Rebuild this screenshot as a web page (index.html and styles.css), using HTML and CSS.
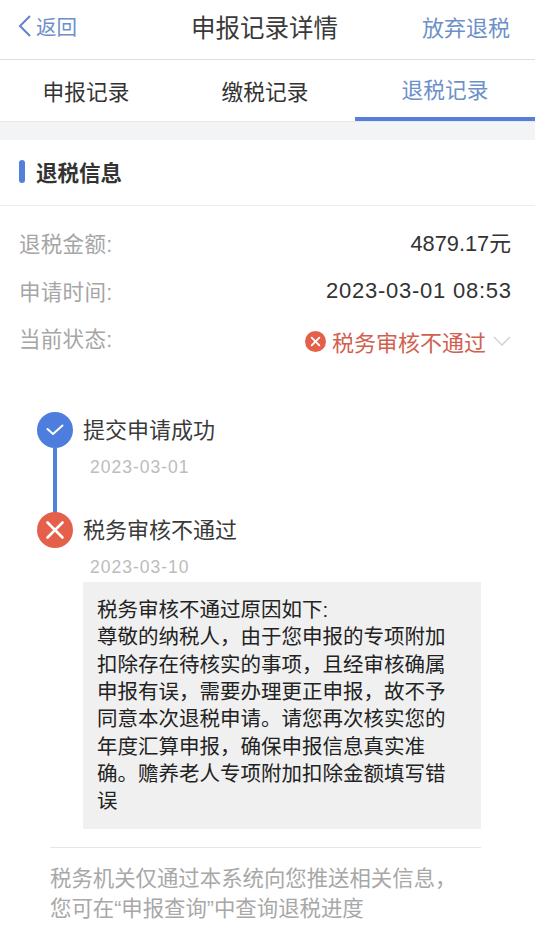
FILE: index.html
```html
<!DOCTYPE html>
<html lang="zh-CN">
<head>
<meta charset="utf-8">
<title>申报记录详情</title>
<link rel="stylesheet" href="styles.css">
</head>
<body>
<header class="navbar">
  <div class="back">
    <svg class="back-icon" viewBox="0 0 15 24"><path d="M13 2 3 12l10 10"/></svg>
    <span>返回</span>
  </div>
  <h1 class="nav-title">申报记录详情</h1>
  <div class="nav-action">放弃退税</div>
</header>
<nav class="tabs">
  <div class="tab">申报记录</div>
  <div class="tab">缴税记录</div>
  <div class="tab tab-active">退税记录</div>
</nav>
<div class="band"></div>
<section class="section-head">
  <span class="section-mark"></span>
  <h2 class="section-title">退税信息</h2>
</section>
<section class="info">
  <div class="row">
    <span class="label">退税金额:</span>
    <span class="value">4879.17元</span>
  </div>
  <div class="row">
    <span class="label">申请时间:</span>
    <span class="value value-date">2023-03-01 08:53</span>
  </div>
  <div class="row">
    <span class="label">当前状态:</span>
    <span class="status">
      <svg class="status-icon" viewBox="0 0 22 22"><circle cx="11" cy="11" r="11" fill="#e4604a"/><path d="M7 7l8 8M15 7l-8 8" stroke="#fff" stroke-width="2" stroke-linecap="round" fill="none"/></svg>
      <span class="status-text">税务审核不通过</span>
      <svg class="chevron" viewBox="0 0 18 10"><path d="M1 1l8 8 8-8"/></svg>
    </span>
  </div>
</section>
<section class="timeline">
  <div class="step step-first">
    <div class="marker">
      <svg class="dot" viewBox="0 0 36 36"><circle cx="18" cy="18" r="18" fill="#4d7ddd"/><path d="M10.5 17l5.5 5 9.5-8.5" stroke="#fff" stroke-width="2" stroke-linecap="round" stroke-linejoin="round" fill="none"/></svg>
      <span class="line"></span>
    </div>
    <div class="step-body">
      <div class="step-title">提交申请成功</div>
      <div class="step-date">2023-03-01</div>
    </div>
  </div>
  <div class="step">
    <div class="marker">
      <svg class="dot" viewBox="0 0 36 36"><circle cx="18" cy="18" r="18" fill="#e4604a"/><path d="M10.5 10.5l15 15M25.5 10.5l-15 15" stroke="#fff" stroke-width="2.6" stroke-linecap="round" fill="none"/></svg>
    </div>
    <div class="step-body">
      <div class="step-title">税务审核不通过</div>
      <div class="step-date">2023-03-10</div>
      <div class="reason">税务审核不通过原因如下:<br>尊敬的纳税人，由于您申报的专项附加扣除存在待核实的事项，且经审核确属申报有误，需要办理更正申报，故不予同意本次退税申请。请您再次核实您的年度汇算申报，确保申报信息真实准确。赡养老人专项附加扣除金额填写错误</div>
    </div>
  </div>
</section>
<footer class="note">税务机关仅通过本系统向您推送相关信息，您可在“申报查询”中查询退税进度</footer>
</body>
</html>
```

FILE: styles.css
```css
* { box-sizing: border-box; }
html, body { margin: 0; padding: 0; }
body {
  width: 535px;
  height: 942px;
  overflow: hidden;
  background: #fff;
  color: #333;
  font-family: "Liberation Sans", "Noto Sans CJK SC", sans-serif;
}
h1, h2 { margin: 0; font-weight: 400; }

.navbar {
  display: flex;
  align-items: center;
  justify-content: space-between;
  height: 60px;
  padding: 0 25px 7px 17px;
  border-bottom: 1px solid #dedede;
}
.back { display: flex; align-items: center; gap: 4px; width: 110px; font-size: 20.5px; color: #6d90c9; }
.back-icon { width: 15px; height: 24px; fill: none; stroke: #5f84cf; stroke-width: 2; }
.nav-title { margin-left: 2px; font-size: 24.5px; color: #3a3a3a; }
.nav-action { width: 110px; text-align: right; font-size: 22px; color: #6d90c9; }

.tabs { display: grid; grid-template-columns: 175px 180px 180px; height: 61px; }
.tab {
  display: flex;
  align-items: center;
  justify-content: center;
  font-size: 21.7px;
  padding-bottom: 1px;
  color: #333;
}
.tab:first-child { padding-right: 3px; }
.tab-active { color: #6d90c9; border-bottom: 4px solid #5380db; padding-bottom: 0; }

.band { height: 19px; background: #f3f4f6; border-top: 1px solid #e8e8e8; }

.section-head {
  display: flex;
  align-items: center;
  gap: 11px;
  height: 66px;
  padding: 0 0 2px 19px;
  border-bottom: 1px solid #ececec;
}
.section-mark { width: 6px; height: 23px; border-radius: 3px; background: #5380db; }
.section-title { font-size: 21.5px; font-weight: 700; color: #333; }

.info { padding: 13px 24px 0 19px; }
.row { display: flex; align-items: center; justify-content: space-between; height: 47.5px; }
.label { font-size: 21.5px; color: #a6a6a6; letter-spacing: 0.3px; }
.value { padding-top: 2px; font-size: 21.8px; line-height: 28px; color: #333; }
.value-date { font-size: 22px; letter-spacing: 0.75px; margin-right: -0.75px; }
.status { display: flex; align-items: center; padding-top: 7px; }
.status-icon { width: 21px; height: 21px; margin-right: 6px; }
.status-text { font-size: 22px; color: #d2604f; }
.chevron { width: 18px; height: 10px; margin-left: 7px; fill: none; stroke: #d0d0d0; stroke-width: 1.3; }

.timeline { margin-top: 50.5px; padding: 0 54px 0 37px; }
.step { display: flex; gap: 10px; }
.step-first { height: 100px; }
.marker { display: flex; flex-direction: column; align-items: center; width: 36px; flex: none; }
.dot { width: 36px; height: 36px; flex: none; position: relative; z-index: 1; }
.line { flex: 1; width: 4px; margin-bottom: -4px; background: #5380db; }
.step-body { flex: 1; min-width: 0; }
.step-title { height: 36px; line-height: 38px; font-size: 22px; color: #3a3a3a; }
.step-date { margin-top: 8px; padding-left: 7px; font-size: 17.5px; line-height: 22px; color: #bcbcbc; letter-spacing: 1px; }
.reason {
  margin: 4px 0 0;
  width: 398px;
  padding: 14px 29px 14px 14px;
  background: #f0f0f0;
  font-size: 20.5px;
  line-height: 27.35px;
  color: #222;
}

.note {
  margin: 18px 54px 0 50px;
  padding: 16px 20px 0 0;
  border-top: 1px solid #e6e6e6;
  font-size: 21.4px;
  line-height: 30px;
  word-spacing: 0;
  color: #a8a8a8;
}
```
